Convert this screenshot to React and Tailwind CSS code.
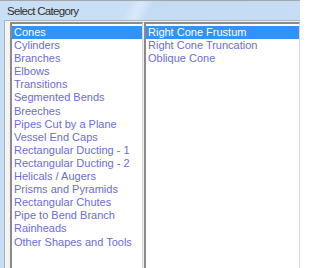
import React from 'react';

const categories = [
  'Cones',
  'Cylinders',
  'Branches',
  'Elbows',
  'Transitions',
  'Segmented Bends',
  'Breeches',
  'Pipes Cut by a Plane',
  'Vessel End Caps',
  'Rectangular Ducting - 1',
  'Rectangular Ducting - 2',
  'Helicals / Augers',
  'Prisms and Pyramids',
  'Rectangular Chutes',
  'Pipe to Bend Branch',
  'Rainheads',
  'Other Shapes and Tools',
];

const shapes = ['Right Cone Frustum', 'Right Cone Truncation', 'Oblique Cone'];

const ListBox = ({ items, selected, className }) => {
  return (
    <div
      className={`h-[260px] bg-white border-t-2 border-l-2 border-r border-[#8a8a8a] border-r-[#d8d8d8] pt-[2px] ${className}`}
    >
      {items.map((item, i) => (
        <div
          key={item}
          className={`h-[13.1px] leading-[13px] pl-[2px] whitespace-nowrap ${
            i === selected ? 'bg-[#3092fb] text-white' : 'text-[#6c6cd6]'
          }`}
        >
          {item}
        </div>
      ))}
    </div>
  );
};

const App = () => {
  return (
    <div className="w-[300px] h-[268px] overflow-hidden bg-[#c7ddf5] flex flex-col font-['Liberation_Sans',Arial,sans-serif] text-[11px]">
      <div className="h-[20px] shrink-0 border-t border-[#a2a6ab] bg-[linear-gradient(115deg,#c9dff6_0%,#c9dff6_42%,#d9e9f9_46%,#c4dbf4_50%,#c7ddf5_100%)] pl-[7px] leading-[20px] text-[11.5px] tracking-[-0.7px] text-[#2e2e2e]">
        Select Category
      </div>
      <div className="flex-1 ml-[4px] border-l border-t border-[#a9b4bf] bg-[#f2f2f2] flex pl-[5px] pt-px gap-px">
        <ListBox items={categories} selected={0} className="w-[133px]" />
        <ListBox items={shapes} selected={0} className="w-[156px]" />
      </div>
    </div>
  );
};

export default App;
